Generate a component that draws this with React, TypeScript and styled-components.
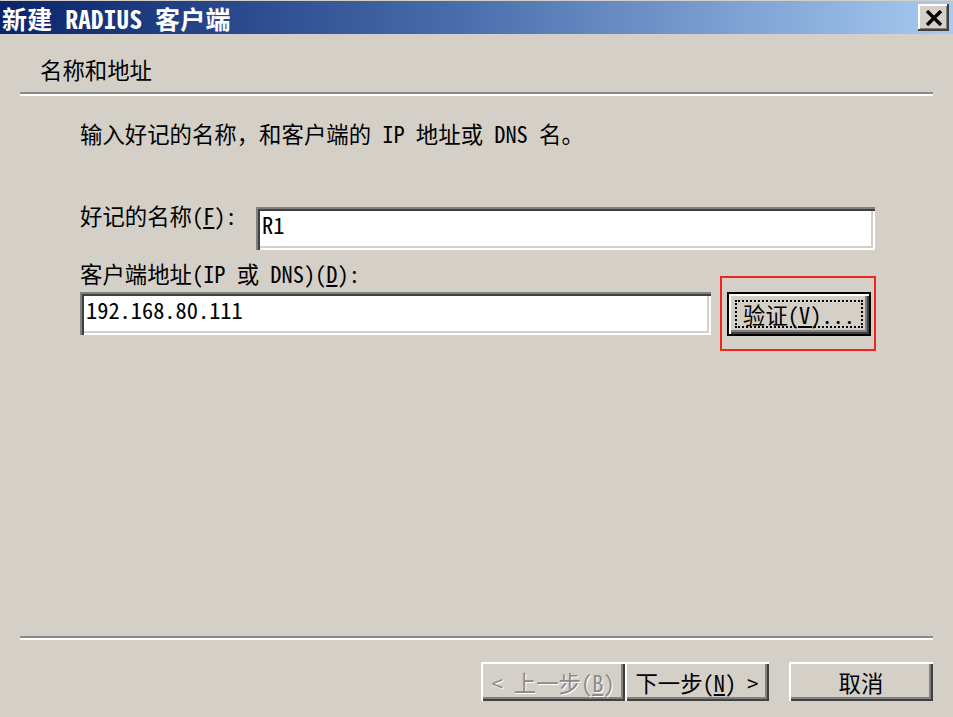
import React from 'react';
import styled, { createGlobalStyle } from 'styled-components';

const GlobalStyle = createGlobalStyle`
  html, body {
    margin: 0;
    padding: 0;
    background: #d4d0c8;
  }
  #root {
    height: 100vh;
  }
`;

const FONT = `"Noto Sans Mono CJK SC", "Noto Sans CJK SC", "DejaVu Sans Mono", monospace`;

const Window = styled.div`
  display: flex;
  flex-direction: column;
  height: 717px;
  width: 953px;
  background: #d4d0c8;
  font-family: ${FONT};
  font-size: 22.4px;
  color: #000;
  overflow: hidden;
`;

const TitleBar = styled.div`
  display: flex;
  align-items: center;
  justify-content: space-between;
  height: 34px;
  padding: 0 4px 0 2px;
  background: linear-gradient(to right, #0a246a 0%, #4468a8 45%, #a6caf0 100%);
  border-top: 1px solid #d4d0c8;
  box-sizing: border-box;
`;

const Title = styled.div`
  color: #fff;
  font-weight: 700;
  font-size: 25px;
  line-height: 30px;
  letter-spacing: 0.3px;
  white-space: pre;
`;

const CloseButton = styled.div`
  display: flex;
  align-items: center;
  justify-content: center;
  width: 31px;
  height: 27px;
  background: #d4d0c8;
  box-shadow: inset -2px -2px #404040, inset 2px 2px #fff, inset -3px -3px #808080;
`;

const Header = styled.div`
  height: 58px;
  padding: 20px 0 0 40px;
  box-sizing: border-box;
  line-height: 30px;
`;

const Separator = styled.div`
  margin: 0 20px;
  height: 2px;
  background: #8c8a86;
  border-bottom: 2px solid #fff;
`;

const Body = styled.div`
  flex: 1;
  display: flex;
  flex-direction: column;
  padding: 22px 0 0 80px;
`;

const Line = styled.div<{ $top?: number }>`
  line-height: 30px;
  margin-top: ${p => p.$top ?? 0}px;
  white-space: pre;
`;

const Row = styled.div<{ $top: number }>`
  display: flex;
  align-items: flex-start;
  margin-top: ${p => p.$top}px;
`;

const Label = styled.div`
  width: 176px;
  line-height: 30px;
  margin-top: -7px;
  white-space: pre;
`;

const TextBox = styled.div<{ $width: number }>`
  width: ${p => p.$width}px;
  height: 43px;
  box-sizing: border-box;
  background: #fff;
  padding: 2px 0 0 6px;
  line-height: 30px;
  box-shadow: inset 2px 2px #808080, inset 4px 4px #404040, inset -2px -2px #fff, inset -4px -4px #d4d0c8;
`;

const Highlight = styled.div`
  position: relative;
  margin-left: 16px;

  &::after {
    content: '';
    position: absolute;
    top: -16px;
    bottom: -15px;
    left: -7px;
    right: -5px;
    border: 2px solid #f5221b;
    pointer-events: none;
  }
`;

const Button = styled.div<{ $default?: boolean; $disabled?: boolean }>`
  display: flex;
  align-items: center;
  justify-content: center;
  width: 144px;
  height: ${p => (p.$default ? 44 : 39)}px;
  box-sizing: border-box;
  background: #d4d0c8;
  white-space: pre;
  color: ${p => (p.$disabled ? '#8c8a86' : '#000')};
  text-shadow: ${p => (p.$disabled ? '1px 1px #fff' : 'none')};
  box-shadow: ${p =>
    p.$default
      ? 'inset 0 0 0 2px #000, inset 4px 4px #fff, inset -4px -4px #404040, inset -6px -6px #808080'
      : 'inset 2px 2px #fff, inset -2px -2px #404040, inset -4px -4px #808080'};
`;

const Focus = styled.div`
  display: flex;
  align-items: center;
  justify-content: center;
  width: 128px;
  height: 28px;
  box-sizing: border-box;
  border: 2px dotted #000;
  line-height: 24px;
`;

const Footer = styled.div`
  display: flex;
  justify-content: flex-end;
  padding: 22px 20px 16px 0;
`;

const ButtonPair = styled.div`
  display: flex;
  margin-right: 20px;
`;

const U = styled.span`
  text-decoration: underline;
  text-underline-offset: 2px;
`;

export default function App() {
  return (
    <>
      <GlobalStyle />
      <Window>
        <TitleBar>
          <Title>新建 RADIUS 客户端</Title>
          <CloseButton>
            <svg width="18" height="16" viewBox="0 0 18 16">
              <path d="M2 1 L16 15 M16 1 L2 15" stroke="#000" strokeWidth="3.4" />
            </svg>
          </CloseButton>
        </TitleBar>
        <Header>名称和地址</Header>
        <Separator />
        <Body>
          <Line>输入好记的名称，和客户端的 IP 地址或 DNS 名。</Line>
          <Row $top={59}>
            <Label>
              好记的名称(<U>F</U>):
            </Label>
            <TextBox $width={619}>R1</TextBox>
          </Row>
          <Line $top={8}>
            客户端地址(IP 或 DNS)(<U>D</U>):
          </Line>
          <Row $top={4}>
            <TextBox $width={631}>192.168.80.111</TextBox>
            <Highlight>
              <Button $default>
                <Focus>
                  验证(<U>V</U>)...
                </Focus>
              </Button>
            </Highlight>
          </Row>
        </Body>
        <Separator />
        <Footer>
          <ButtonPair>
            <Button $disabled>
              {'< 上一步('}
              <U>B</U>)
            </Button>
            <Button>
              下一步(<U>N</U>) &gt;
            </Button>
          </ButtonPair>
          <Button>取消</Button>
        </Footer>
      </Window>
    </>
  );
}
